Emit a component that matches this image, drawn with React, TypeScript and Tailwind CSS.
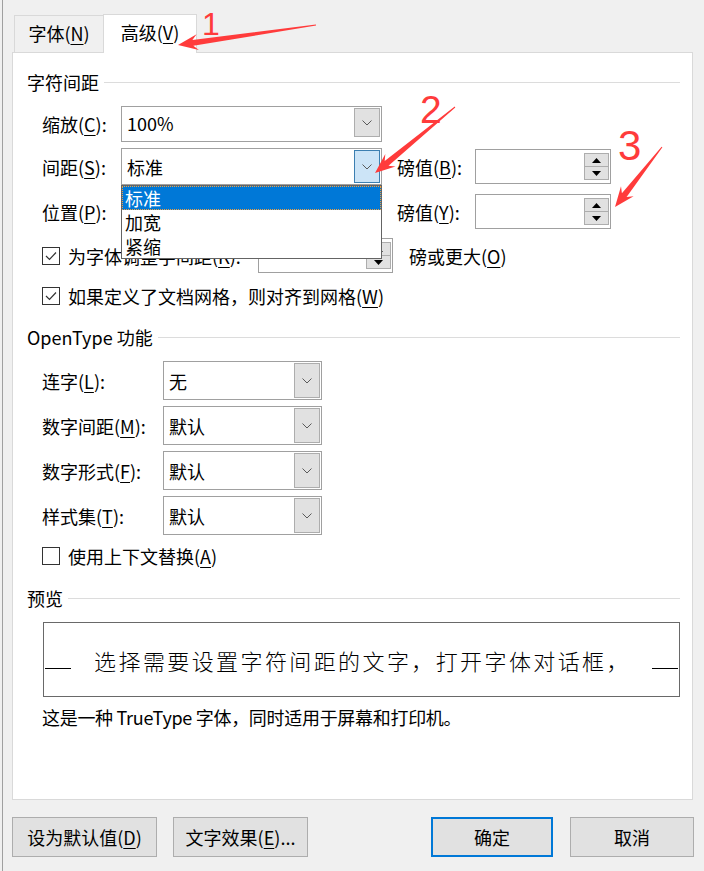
import React from "react";

/**
 * Word 字体对话框 -- 高级 tab, with the 间距 dropdown open and red annotations.
 */

const BTN = "flex h-10 items-center justify-center border border-[#adadad] bg-[#e1e1e1]";

function K({ k }: { k: string }) {
  return <u className="underline decoration-1 underline-offset-[3px]">{k}</u>;
}

function Chevron() {
  return (
    <svg width="10" height="6" viewBox="0 0 10 6">
      <polyline points="0.5,0.5 5,5 9.5,0.5" fill="none" stroke="#5a5a5a" strokeWidth="1" />
    </svg>
  );
}

function Tri({ up }: { up?: boolean }) {
  return (
    <svg width="9" height="5" viewBox="0 0 9 5">
      <polygon points={up ? "0,5 4.5,0 9,5" : "0,0 4.5,5 9,0"} fill="#000" />
    </svg>
  );
}

function Combo({ value, className, active }: { value?: string; className: string; active?: boolean }) {
  return (
    <div className={"flex items-stretch border border-[#a0a0a0] bg-white p-px " + className}>
      <div className="flex flex-1 items-center pl-[4px]">{value}</div>
      {active ? (
        <div className="flex w-[26px] items-center justify-center border border-[#3c7fb1] bg-[#cce4f7]">
          <Chevron />
        </div>
      ) : (
        <div className="flex w-[26px] items-center justify-center border border-[#adadad] bg-[#e1e1e1]">
          <Chevron />
        </div>
      )}
    </div>
  );
}

function Spin({ className }: { className: string }) {
  return (
    <div className={"flex justify-end border border-[#a0a0a0] bg-white px-px py-[3px] " + className}>
      <div className="flex w-[25px] flex-col">
        <div className="flex flex-1 items-center justify-center border border-[#adadad] bg-[#e1e1e1]">
          <Tri up />
        </div>
        <div className="flex flex-1 items-center justify-center border border-t-0 border-[#adadad] bg-[#e1e1e1]">
          <Tri />
        </div>
      </div>
    </div>
  );
}

function Check({ checked }: { checked?: boolean }) {
  return (
    <span className="flex h-[18px] w-[18px] shrink-0 items-center justify-center border border-[#333] bg-white">
      {checked && (
        <svg width="14" height="14" viewBox="0 0 14 14">
          <polyline points="2,7 5.5,10.5 12,3.5" fill="none" stroke="#333" strokeWidth="1.2" />
        </svg>
      )}
    </span>
  );
}

function Section({ title, className }: { title: string; className: string }) {
  return (
    <div className={"flex h-6 items-center " + className}>
      <span>{title}</span>
      <span className="ml-[5px] h-px flex-1 bg-[#dcdcdc]" />
    </div>
  );
}

function arrowPoints(tx: number, ty: number, px: number, py: number) {
  const dx = px - tx;
  const dy = py - ty;
  const len = Math.hypot(dx, dy);
  const ux = dx / len;
  const uy = dy / len;
  const nx = -uy;
  const ny = ux;
  const bx = px - ux * 15;
  const by = py - uy * 15;
  const wx = px - ux * 20;
  const wy = py - uy * 20;
  const pts = [
    [tx + nx * 0.5, ty + ny * 0.5],
    [bx + nx * 3, by + ny * 3],
    [wx + nx * 8, wy + ny * 8],
    [px, py],
    [wx - nx * 8, wy - ny * 8],
    [bx - nx * 3, by - ny * 3],
    [tx - nx * 0.5, ty - ny * 0.5],
  ];
  return pts.map((p) => p[0].toFixed(1) + "," + p[1].toFixed(1)).join(" ");
}

const otRows = [
  { label: "连字", k: "L", value: "无", mt: "mt-[12px]" },
  { label: "数字间距", k: "M", value: "默认", mt: "mt-[6px]" },
  { label: "数字形式", k: "F", value: "默认", mt: "mt-[6px]" },
  { label: "样式集", k: "T", value: "默认", mt: "mt-[6px]" },
];

export default function App() {
  return (
    <div className="relative h-[871px] w-[704px] overflow-hidden bg-[#f0f0f0] pl-[2px] font-['Noto_Sans_CJK_SC',sans-serif] text-[18px] leading-6 text-black">
      <div className="flex h-full flex-col border-l border-[#a0a0a0]">
        {/* Tabs */}
        <div className="ml-[11px] mt-[14px] flex h-[38px] items-end">
          <div className="flex h-[37px] w-[89px] items-center justify-center border-l border-t border-[#d9d9d9] bg-[#f0f0f0] pb-[2px]">
            字体(<K k="N" />)
          </div>
          <div className="relative z-10 -mb-px flex h-[39px] w-[94px] items-center justify-center border-x border-t border-[#d9d9d9] bg-white pb-[4px]">
            高级(<K k="V" />)
          </div>
        </div>

        {/* Panel */}
        <div className="ml-[9px] flex h-[748px] w-[681px] flex-col border border-[#d9d9d9] bg-white pl-[14px] pr-[12px]">
          <Section title="字符间距" className="mt-[17px]" />

          <div className="mt-[12px] flex h-[36px] items-center pl-[15px]">
            <span className="w-[79px]">缩放(<K k="C" />):</span>
            <Combo value="100%" className="h-[36px] w-[261px] pb-[4px]" />
          </div>

          <div className="mt-[6px] flex h-[37px] items-center pl-[15px]">
            <span className="w-[79px]">间距(<K k="S" />):</span>
            <div className="relative">
              <Combo value="标准" className="h-[37px] w-[261px]" active />
              <div className="absolute left-0 top-full z-20 flex h-[74px] w-[261px] flex-col border border-[#646464] bg-white">
                <div className="flex h-[24px] items-center bg-[#0078d7] pl-[3px] text-white outline-1 -outline-offset-1 outline-dotted outline-[#f0a040]">
                  标准
                </div>
                <div className="flex h-[24px] items-center pl-[3px]">加宽</div>
                <div className="flex h-[23px] items-center pl-[3px]">紧缩</div>
              </div>
            </div>
            <span className="ml-[15px] w-[78px]">磅值(<K k="B" />):</span>
            <Spin className="h-[35px] w-[136px]" />
          </div>

          <div className="mt-[8px] flex h-[37px] items-center pl-[15px]">
            <span className="w-[79px]">位置(<K k="P" />):</span>
            <Combo className="h-[37px] w-[261px]" />
            <span className="ml-[15px] w-[78px]">磅值(<K k="Y" />):</span>
            <Spin className="h-[35px] w-[136px]" />
          </div>

          <div className="mt-[8px] flex h-[35px] items-center pl-[15px]">
            <Check checked />
            <span className="ml-[8px] w-[190px] whitespace-nowrap">为字体调整字间距(<K k="K" />):</span>
            <Spin className="h-[35px] w-[135px]" />
            <span className="ml-[16px]">磅或更大(<K k="O" />)</span>
          </div>

          <div className="mt-[11px] flex h-6 items-center pl-[15px]">
            <Check checked />
            <span className="ml-[8px]">如果定义了文档网格，则对齐到网格(<K k="W" />)</span>
          </div>

          <Section title="OpenType 功能" className="mt-[17px]" />

          {otRows.map((r) => (
            <div key={r.k} className={"flex h-[39px] items-center pl-[15px] " + r.mt}>
              <span className="w-[121px]">
                {r.label}(<K k={r.k} />):
              </span>
              <Combo value={r.value} className="h-[39px] w-[159px]" />
            </div>
          ))}

          <div className="mt-[9px] flex h-6 items-center pl-[15px]">
            <Check />
            <span className="ml-[8px]">使用上下文替换(<K k="A" />)</span>
          </div>

          <Section title="预览" className="mt-[18px]" />

          <div className="ml-[16px] mt-[12px] flex h-[75px] w-[637px] items-center justify-between border border-[#696969] px-px">
            <span className="mt-[18px] h-px w-[26px] bg-black" />
            <span className="ml-[2px] text-[22px] font-light tracking-[2.4px]">选择需要设置字符间距的文字，打开字体对话框，</span>
            <span className="mt-[18px] h-px w-[26px] bg-black" />
          </div>

          <div className="mt-[10px] h-5 pl-[15px] leading-5 tracking-[-0.3px]">这是一种 TrueType 字体，同时适用于屏幕和打印机。</div>
        </div>

        {/* Buttons */}
        <div className="ml-[9px] mt-[17px] flex h-10">
          <div className={BTN + " w-[145px]"}>
            设为默认值(<K k="D" />)
          </div>
          <div className={BTN + " ml-[16px] w-[135px]"}>
            文字效果(<K k="E" />)...
          </div>
          <div className="ml-[123px] flex h-10 w-[122px] items-center justify-center border-2 border-[#0078d7] bg-[#e1e1e1]">
            确定
          </div>
          <div className={BTN + " ml-[17px] w-[124px]"}>取消</div>
        </div>
      </div>

      {/* Red annotations */}
      <svg className="pointer-events-none absolute left-0 top-0 z-30" width="704" height="871" viewBox="0 0 704 871">
        <g fill="#ff3b3b">
          <polygon points={arrowPoints(316, 25, 178, 45)} />
          <polygon points={arrowPoints(455, 107, 375, 173)} />
          <polygon points={arrowPoints(662, 147, 615, 207)} />
          <text x="202" y="35" fontSize="32" fontFamily="Liberation Sans, sans-serif">1</text>
          <text x="420" y="123" fontSize="39" fontFamily="Liberation Sans, sans-serif">2</text>
          <text x="618" y="160" fontSize="42" fontFamily="Liberation Sans, sans-serif">3</text>
        </g>
      </svg>
    </div>
  );
}
